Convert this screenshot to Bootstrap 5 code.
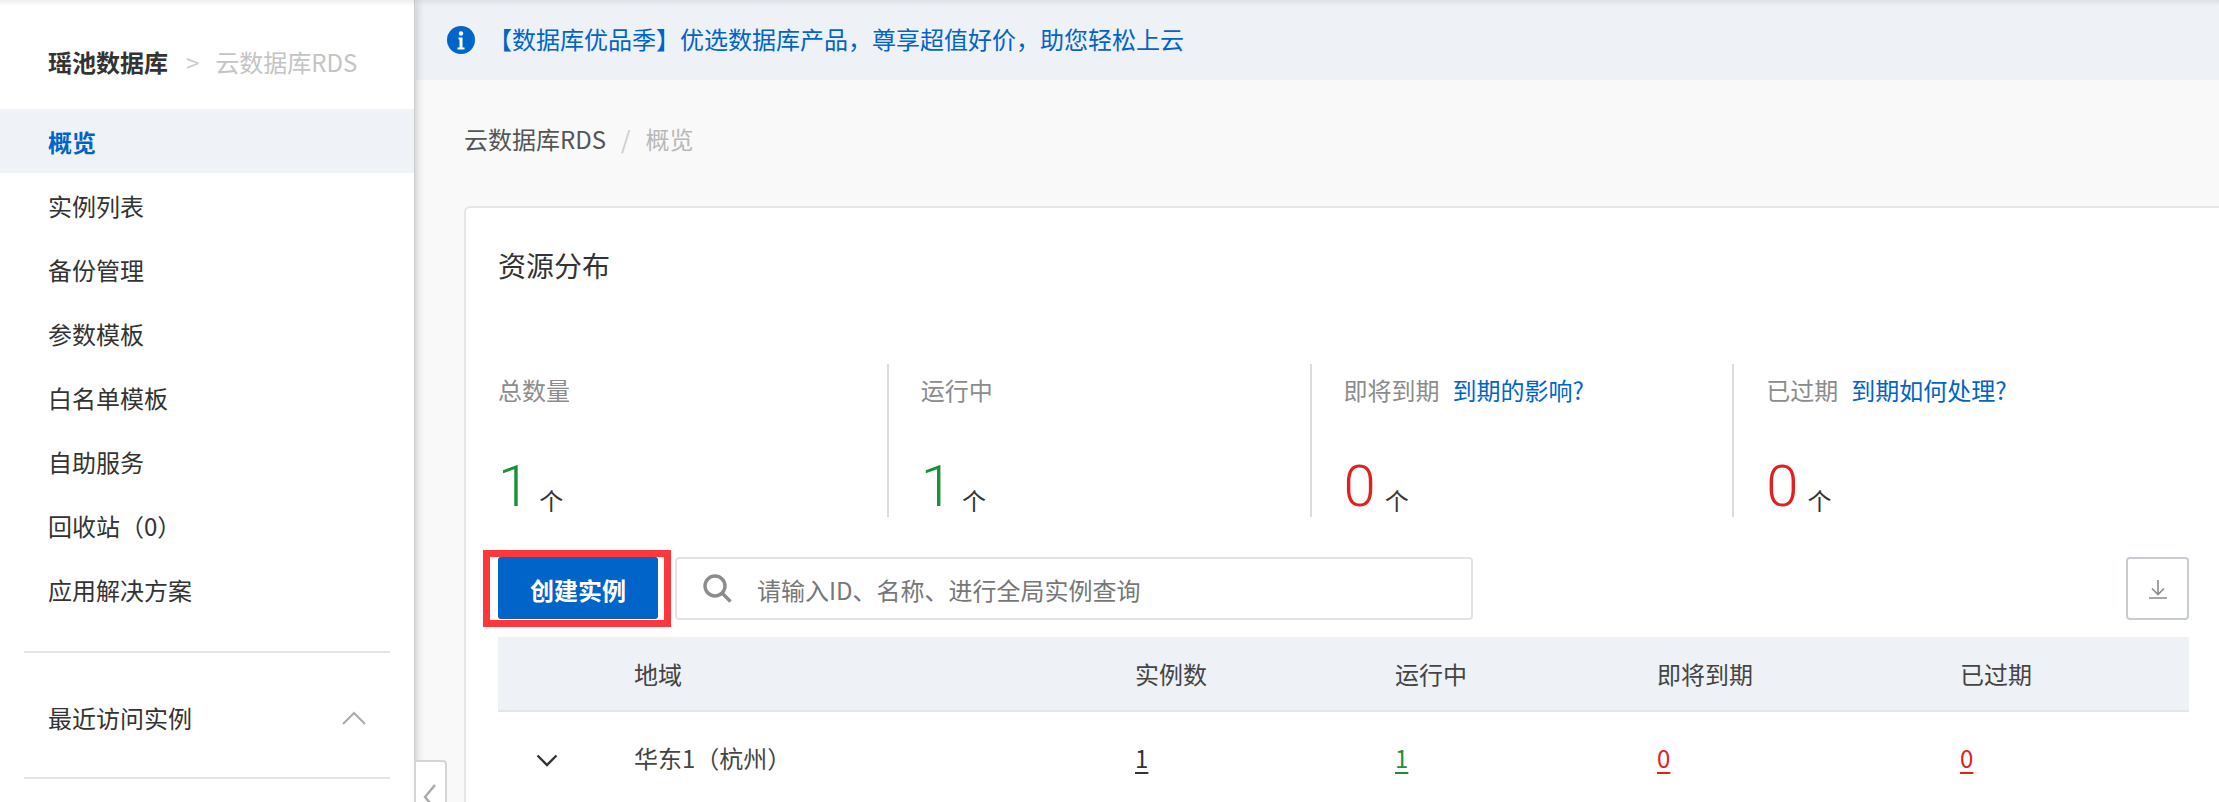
<!DOCTYPE html>
<html lang="zh-CN">
<head>
  <meta charset="UTF-8" />
  <meta name="viewport" content="width=device-width, initial-scale=1.0"/>
  <title>云数据库RDS - 概览</title>
  <link href="https://cdn.jsdelivr.net/npm/bootstrap@5.3.2/dist/css/bootstrap.min.css" rel="stylesheet">
  <style>
    html, body {
      height: 802px;
      overflow: hidden;
    }
    body {
      font-family: "Noto Sans CJK SC", "Liberation Sans", sans-serif;
      font-size: 24px;
      line-height: 36px;
      color: #333;
      background-color: #f9f9f9;
    }
    a { text-decoration: none; color: #0064c8; }
    .top-shade {
      top: 0; left: 0; right: 0;
      height: 6px;
      z-index: 5;
      background: linear-gradient(rgba(0,0,0,.07), rgba(0,0,0,0));
    }
    .side-pane {
      flex: 0 0 414px;
      height: 802px;
      background: #fff;
      box-shadow: 1px 0 0 #ccc, 3px 0 8px rgba(0,0,0,.18);
      z-index: 3;
    }
    .side-brand {
      padding: 44px 0 29px 48px;
    }
    .side-brand b { color: #333; }
    .side-brand .brand-sep { color: #ccc; margin: 0 16px 0 18px; }
    .side-brand .brand-sub { color: #c4c4c4; }
    .side-link {
      display: block;
      height: 64px;
      line-height: 66px;
      padding-left: 48px;
      color: #333;
    }
    .side-link.current {
      background: #eff2f7;
      color: #0064c8;
      font-weight: 700;
    }
    .side-recent {
      margin: 30px 24px 0;
      padding: 47px 24px 41px;
      border-top: 2px solid #e3e5e8;
      border-bottom: 2px solid #e3e5e8;
    }
    .main-pane {
      flex: 1 1 0;
      min-width: 0;
      height: 802px;
      overflow: hidden;
    }
    .promo-bar {
      height: 80px;
      margin-left: 2px;
      padding-left: 31px;
      background: #eef1f6;
      color: #0064c8;
    }
    .promo-bar svg { margin-right: 13px; }
    .promo-bar span { margin-bottom: 2px; }
    .crumbs {
      padding: 41px 0 49px 50px;
      color: #555;
    }
    .crumbs .crumb-sep { color: #ccc; margin: 0 15px; }
    .crumbs .crumb-now { color: #b8b8b8; }
    .res-panel {
      margin-left: 50px;
      margin-right: -4px;
      padding: 37px 32px 0;
      background: #fff;
      border: 2px solid #e6e6e6;
      border-radius: 6px 0 0 0;
      height: 700px;
    }
    .res-title {
      font-size: 28px;
      line-height: 40px;
      margin-bottom: 79px;
    }
    .stat-cell {
      flex: 0 0 422.75px;
      height: 153px;
      padding: 8px 0 0 32px;
      border-right: 2px solid #dcdcdc;
    }
    .stat-cell:first-child { flex-basis: 390.75px; padding-left: 0; }
    .stat-cell:last-child { border-right: 0; }
    .stat-label { color: #8c8c8c; }
    .stat-label a { margin-left: 13px; }
    .stat-value {
      margin-top: 47px;
      height: 62px;
      line-height: 62px;
    }
    .stat-num {
      font-family: Roboto, "Liberation Sans", sans-serif;
      font-weight: 300;
      font-size: 58px;
      margin-right: 9px;
    }
    .stat-unit { vertical-align: -4px; }
    .tone-green { color: #1a8f3c; }
    .tone-red { color: #e32020; }
    .tool-row {
      margin-top: 40px;
      margin-bottom: 17px;
      height: 63px;
    }
    .make-wrap { flex: 0 0 160px; }
    .make-btn {
      width: 160px;
      height: 62px;
      padding: 3px 0 0;
      border: 0;
      border-radius: 3px;
      font-size: 24px;
      font-weight: 700;
      background: #0064c8;
      color: #fff;
      z-index: 1;
    }
    .red-mark {
      top: -7px;
      bottom: -7px;
      left: -15px;
      right: -13px;
      border: 7px solid #fd373b;
    }
    .find-box {
      width: 798px;
      margin-left: 17px;
      padding-left: 26px;
      border: 2px solid #e3e3e3;
      border-radius: 4px;
      background: #fff;
    }
    .find-box input {
      border: 0;
      outline: 0;
      flex: 1;
      margin-left: 25px;
      padding: 3px 0 0;
      background: transparent;
      color: #333;
    }
    .find-box input::placeholder { color: #777; opacity: 1; }
    .save-btn {
      width: 63px;
      height: 63px;
      padding: 0;
      background: #fff;
      border: 2px solid #c7ccd3;
      border-radius: 4px;
    }
    .zone-table {
      --bs-table-bg: transparent;
      table-layout: fixed;
      width: 1691px;
      margin: 0;
      font-size: 24px;
      color: #333;
    }
    .zone-table th {
      height: 74px;
      padding: 0;
      font-weight: 400;
      background: #eef1f6;
      border-bottom: 2px solid #e3e6ea;
      color: #444;
      vertical-align: middle;
    }
    .zone-table td {
      height: 92px;
      padding: 0;
      border: 0;
      vertical-align: middle;
      color: #444;
    }
    .zone-table .w-expand { width: 136px; padding-left: 38px; }
    .zone-table .w-zone { width: 501px; }
    .zone-table .w-count { width: 260px; }
    .zone-table .w-run { width: 262px; }
    .zone-table .w-soon { width: 303px; }
    .num-link { text-decoration: underline; text-underline-offset: 4px; color: #333; }
    .num-link.tone-green { color: #1a8f3c; }
    .num-link.tone-red { color: #e32020; }
    .fold-handle {
      top: 760px;
      left: 414px;
      width: 33px;
      height: 60px;
      background: #fff;
      border: 2px solid #d5d5d5;
      border-radius: 0 4px 0 0;
      z-index: 4;
    }
    .fold-handle svg { margin: 22px 0 0 7px; display: block; }
  </style>
</head>
<body>
  <div class="top-shade position-absolute"></div>
  <div class="d-flex">
    <aside class="side-pane">
      <div class="side-brand d-flex">
        <b>瑶池数据库</b>
        <span class="brand-sep">&gt;</span>
        <span class="brand-sub">云数据库RDS</span>
      </div>
      <nav>
        <a class="side-link current" href="#">概览</a>
        <a class="side-link" href="#">实例列表</a>
        <a class="side-link" href="#">备份管理</a>
        <a class="side-link" href="#">参数模板</a>
        <a class="side-link" href="#">白名单模板</a>
        <a class="side-link" href="#">自助服务</a>
        <a class="side-link" href="#">回收站（0）</a>
        <a class="side-link" href="#">应用解决方案</a>
      </nav>
      <div class="side-recent d-flex align-items-center justify-content-between">
        <span>最近访问实例</span>
        <svg width="24" height="14" viewBox="0 0 24 14" fill="none" stroke="#aaa" stroke-width="2"><path d="M1 13 12 2l11 11"/></svg>
      </div>
    </aside>

    <main class="main-pane">
      <div class="promo-bar d-flex align-items-center">
        <svg width="28" height="28" viewBox="0 0 28 28"><circle cx="14" cy="14" r="14" fill="#0064c8"/><circle cx="14" cy="7.5" r="2.2" fill="#fff"/><path d="M11.5 11.5h4v10h2v2h-7v-2h2v-8h-1z" fill="#fff"/></svg>
        <span>【数据库优品季】优选数据库产品，尊享超值好价，助您轻松上云</span>
      </div>

      <div class="crumbs">云数据库RDS<span class="crumb-sep">/</span><span class="crumb-now">概览</span></div>

      <section class="res-panel">
        <div class="res-title">资源分布</div>

        <div class="d-flex">
          <div class="stat-cell">
            <div class="stat-label">总数量</div>
            <div class="stat-value"><span class="stat-num tone-green">1</span><span class="stat-unit">个</span></div>
          </div>
          <div class="stat-cell">
            <div class="stat-label">运行中</div>
            <div class="stat-value"><span class="stat-num tone-green">1</span><span class="stat-unit">个</span></div>
          </div>
          <div class="stat-cell">
            <div class="stat-label">即将到期<a href="#">到期的影响?</a></div>
            <div class="stat-value"><span class="stat-num tone-red">0</span><span class="stat-unit">个</span></div>
          </div>
          <div class="stat-cell">
            <div class="stat-label">已过期<a href="#">到期如何处理?</a></div>
            <div class="stat-value"><span class="stat-num tone-red">0</span><span class="stat-unit">个</span></div>
          </div>
        </div>

        <div class="tool-row d-flex">
          <div class="make-wrap position-relative">
            <div class="red-mark position-absolute"></div>
            <button class="make-btn btn position-relative" type="button">创建实例</button>
          </div>
          <div class="find-box d-flex align-items-center">
            <svg width="29" height="29" viewBox="0 0 29 29" fill="none" stroke="#8c8c8c" stroke-width="3.4"><circle cx="12" cy="12" r="10"/><path d="M19 19l8.5 8.5"/></svg>
            <input type="text" placeholder="请输入ID、名称、进行全局实例查询">
          </div>
          <button class="save-btn btn ms-auto d-flex align-items-center justify-content-center" type="button" aria-label="下载">
            <svg width="20" height="20" viewBox="0 0 20 20" fill="none" stroke="#8c8c8c" stroke-width="1.6"><path d="M10 1v14M4 9.5l6 6 6-6M1 19h18"/></svg>
          </button>
        </div>

        <table class="zone-table table">
          <thead>
            <tr>
              <th class="w-expand"></th>
              <th class="w-zone">地域</th>
              <th class="w-count">实例数</th>
              <th class="w-run">运行中</th>
              <th class="w-soon">即将到期</th>
              <th>已过期</th>
            </tr>
          </thead>
          <tbody>
            <tr>
              <td class="w-expand"><svg width="22" height="13" viewBox="0 0 22 13" fill="none" stroke="#333" stroke-width="2.4"><path d="M1.5 1.5 11 11l9.5-9.5"/></svg></td>
              <td>华东1（杭州）</td>
              <td><a class="num-link" href="#">1</a></td>
              <td><a class="num-link tone-green" href="#">1</a></td>
              <td><a class="num-link tone-red" href="#">0</a></td>
              <td><a class="num-link tone-red" href="#">0</a></td>
            </tr>
          </tbody>
        </table>
      </section>
    </main>
  </div>

  <div class="fold-handle position-absolute">
    <svg width="14" height="26" viewBox="0 0 14 26" fill="none" stroke="#aaa" stroke-width="2.4"><path d="M12 1 2 13l10 12"/></svg>
  </div>

  <script src="https://cdn.jsdelivr.net/npm/bootstrap@5.3.2/dist/js/bootstrap.bundle.min.js"></script>
</body>
</html>
